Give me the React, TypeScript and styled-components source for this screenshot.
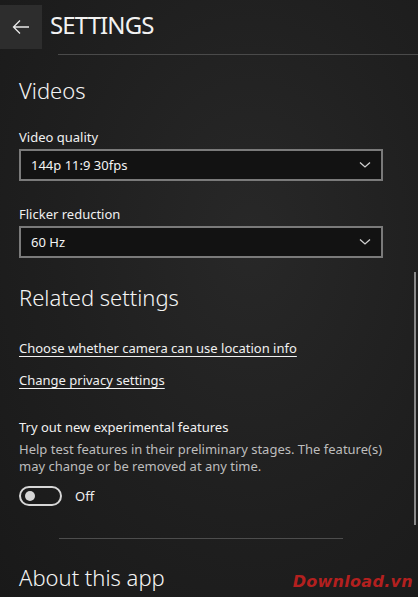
import React from "react";
import styled, { createGlobalStyle } from "styled-components";

const Global = createGlobalStyle`
  html, body { margin: 0; padding: 0; }
  body {
    width: 418px; height: 597px; overflow: hidden;
    background: #1e1e1e;
    font-family: "Noto Sans", "Open Sans", sans-serif;
    color: #fff;
  }
`;

const Page = styled.div`
  position: relative;
  width: 418px;
  height: 597px;
  overflow: hidden;
  background: radial-gradient(ellipse at 60% 40%, #282828 0%, #1f1f1f 55%, #191919 100%);
`;

const Header = styled.div`
  display: flex;
  align-items: center;
  height: 44px;
  padding-top: 5px;
`;

const BackButton = styled.div`
  width: 42px;
  height: 44px;
  background: #2d2d2d;
  display: flex;
  align-items: center;
  justify-content: center;
`;

const Title = styled.div`
  margin-left: 8px;
  font-size: 24px;
  letter-spacing: -0.9px;
  color: #f2f2f2;
  margin-top: -5px;
`;

const HeaderRule = styled.div`
  margin-left: 58px;
  margin-top: 5px;
  height: 1px;
  background: #4a4a4a;
`;

const Content = styled.div`
  padding: 0 35px 0 19px;
  display: flex;
  flex-direction: column;
`;

const SectionTitle = styled.div<{ $mt: number }>`
  font-size: 22px;
  font-weight: 300;
  color: #f4f4f4;
  margin-top: ${(p) => p.$mt}px;
  line-height: 32px;
`;

const Label = styled.div<{ $mt: number }>`
  font-size: 13px;
  color: #f0f0f0;
  margin-top: ${(p) => p.$mt}px;
  line-height: 18px;
`;

const Select = styled.div`
  margin-top: 3px;
  height: 28px;
  border: 2px solid #7a7a7a;
  background: #121212;
  display: flex;
  align-items: center;
  justify-content: space-between;
  padding: 0 10px 0 10px;
  font-size: 13px;
  color: #f4f4f4;
`;

const Link = styled.a<{ $mt: number }>`
  font-size: 13px;
  color: #f0f0f0;
  text-decoration: underline;
  text-underline-offset: 3px;
  line-height: 18px;
  align-self: flex-start;
  margin-top: ${(p) => p.$mt}px;
`;

const Help = styled.div`
  font-size: 13px;
  color: #bdbdbd;
  line-height: 17px;
  margin-top: 5px;
`;

const ToggleRow = styled.div`
  display: flex;
  align-items: center;
  gap: 13px;
  margin-top: 11px;
  font-size: 13px;
  color: #f0f0f0;
`;

const Toggle = styled.div`
  box-sizing: border-box;
  width: 43px;
  height: 20px;
  border: 2px solid #d6d6d6;
  border-radius: 10px;
  display: flex;
  align-items: center;
  padding-left: 4px;
`;

const Knob = styled.div`
  width: 10px;
  height: 10px;
  border-radius: 50%;
  background: #d6d6d6;
`;

const Divider = styled.div`
  margin: 32px 75px 0 59px;
  height: 1px;
  background: #4d4d4d;
`;

const Version = styled.div`
  font-size: 13px;
  color: #f0f0f0;
  margin-top: 2px;
`;

const Scrollbar = styled.div`
  position: absolute;
  right: 2px;
  top: 272px;
  width: 2px;
  height: 253px;
  background: #8a8a8a;
`;

const Watermark = styled.div`
  position: absolute;
  right: 5px;
  bottom: 6px;
  font-family: "DejaVu Sans", sans-serif;
  font-weight: bold;
  font-style: italic;
  font-size: 16px;
  color: #b3201f;
  letter-spacing: 0.3px;
`;

const Chevron = () => (
  <svg width="12" height="8" viewBox="0 0 12 8">
    <path d="M1 1.5 L6 6 L11 1.5" stroke="#d0d0d0" strokeWidth="1.3" fill="none" />
  </svg>
);

const Arrow = () => (
  <svg width="18" height="16" viewBox="0 0 18 16">
    <path d="M17 8 H2 M8 1.5 L1.5 8 L8 14.5" stroke="#e8e8e8" strokeWidth="1.3" fill="none" />
  </svg>
);

export default function App() {
  return (
    <>
      <Global />
      <Page>
        <Header>
          <BackButton>
            <Arrow />
          </BackButton>
          <Title>SETTINGS</Title>
        </Header>
        <HeaderRule />
        <Content>
          <SectionTitle $mt={19}>Videos</SectionTitle>
          <Label $mt={22}>Video quality</Label>
          <Select>
            <span>144p 11:9 30fps</span>
            <Chevron />
          </Select>
          <Label $mt={24}>Flicker reduction</Label>
          <Select>
            <span>60 Hz</span>
            <Chevron />
          </Select>
          <SectionTitle $mt={23}>Related settings</SectionTitle>
          <Link $mt={26}>Choose whether camera can use location info</Link>
          <Link $mt={14}>Change privacy settings</Link>
          <Label $mt={29}>Try out new experimental features</Label>
          <Help>
            Help test features in their preliminary stages. The feature(s) may change or be removed at any time.
          </Help>
          <ToggleRow>
            <Toggle>
              <Knob />
            </Toggle>
            <span>Off</span>
          </ToggleRow>
        </Content>
        <Divider />
        <Content>
          <SectionTitle $mt={22}>About this app</SectionTitle>
          <Version>2022.2110.0.0</Version>
        </Content>
        <Scrollbar />
        <Watermark>Download.vn</Watermark>
      </Page>
    </>
  );
}
